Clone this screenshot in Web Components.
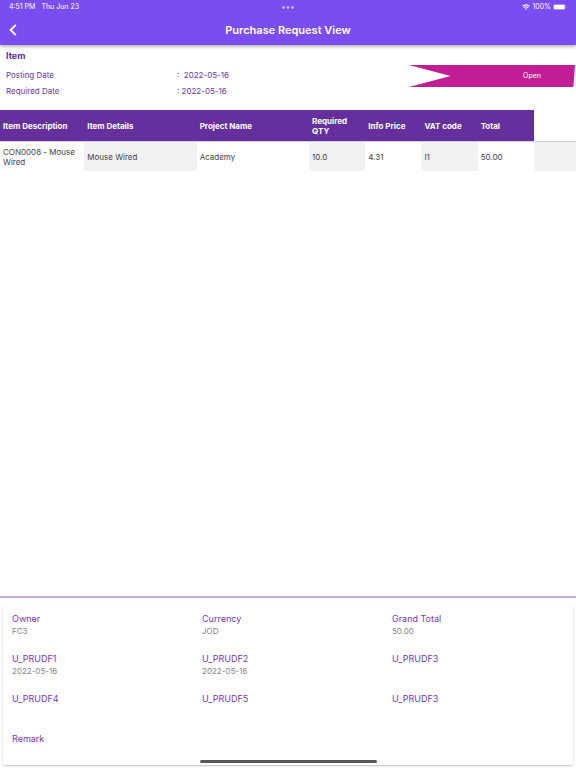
<!DOCTYPE html>
<html lang="en">
<head>
<meta charset="utf-8">
<meta name="viewport" content="width=device-width, initial-scale=1">
<title>Purchase Request View</title>
<style>
  body {
    margin: 0;
    background: #fff;
    font-family: Inter, 'Liberation Sans', sans-serif;
    font-size: 8px;
    line-height: 10px;
  }
</style>
</head>
<body>
<purchase-request-page>
  <status-bar slot="top" time="4:51 PM" date="Thu Jun 23" battery="100%"></status-bar>
  <app-bar slot="top">Purchase Request View</app-bar>

  <request-summary heading="Item" status="Open">
    <summary-row label="Posting Date">:&nbsp; 2022-05-16</summary-row>
    <summary-row label="Required Date">: 2022-05-16</summary-row>
  </request-summary>
  <item-table></item-table>

  <totals-card slot="bottom">
    <info-field label="Owner">FC3</info-field>
    <info-field label="Currency">JOD</info-field>
    <info-field label="Grand Total">50.00</info-field>
    <info-field label="U_PRUDF1">2022-05-16</info-field>
    <info-field label="U_PRUDF2">2022-05-16</info-field>
    <info-field label="U_PRUDF3"></info-field>
    <info-field label="U_PRUDF4"></info-field>
    <info-field label="U_PRUDF5"></info-field>
    <info-field label="U_PRUDF3"></info-field>
    <info-field label="Remark"></info-field>
  </totals-card>
</purchase-request-page>

<script>
/**
 * Base element: renders its styles and markup into an open shadow root
 */
class ViewElement extends HTMLElement {
  constructor() {
    super();
    this.attachShadow({ mode: 'open' });
  }

  connectedCallback() {
    this.shadowRoot.innerHTML = `
      <style>${this.getStyles()}</style>
      ${this.getMarkup()}
    `;
  }
}

class PurchaseRequestPage extends ViewElement {
  getMarkup() {
    return `
      <header><slot name="top"></slot></header>
      <main><slot></slot></main>
      <footer><slot name="bottom"></slot></footer>
      <div class="home-indicator"></div>
    `;
  }

  getStyles() {
    return `
      :host {
        display: flex;
        flex-direction: column;
        min-height: 100vh;
        position: relative;
      }

      header {
        background: #7a4df0;
        color: #fff;
        box-shadow: 0 1px 4px rgba(0, 0, 0, 0.4);
      }

      main {
        flex: 1;
      }

      footer {
        border-top: 2px solid #c6a9e4;
        padding: 6px 3px 3px;
      }

      /* Floats over the bottom card */
      .home-indicator {
        position: absolute;
        bottom: 5px;
        left: 50%;
        width: 177px;
        height: 3px;
        margin-left: -88px;
        border-radius: 2px;
        background: #59595b;
      }
    `;
  }
}

class StatusBar extends ViewElement {
  getMarkup() {
    return `
      <div class="side">
        <span>${this.getAttribute('time')}</span>
        <span>${this.getAttribute('date')}</span>
      </div>
      <svg width="12" height="3" viewBox="0 0 12 3" fill="#c9b5fb" aria-hidden="true">
        <circle cx="1.5" cy="1.5" r="1.4"/>
        <circle cx="6" cy="1.5" r="1.4"/>
        <circle cx="10.5" cy="1.5" r="1.4"/>
      </svg>
      <div class="side end">
        <svg width="8" height="6" viewBox="0 0 16 12" fill="none" stroke="#fff" stroke-width="2.2" aria-hidden="true">
          <path d="M1 4.6a10 10 0 0 1 14 0"/>
          <path d="M3.8 7.5a6 6 0 0 1 8.4 0"/>
          <path d="M8 11.8 5.8 9.5a3.2 3.2 0 0 1 4.4 0z" fill="#fff" stroke="none"/>
        </svg>
        <span>${this.getAttribute('battery')}</span>
        <svg width="14" height="6" viewBox="0 0 28 12" aria-hidden="true">
          <rect x=".5" y=".5" width="24" height="11" rx="3" fill="none" stroke="#b49bf8"/>
          <rect x="1.6" y="1.6" width="21.8" height="8.8" rx="2" fill="#fff"/>
          <path d="M26 4v4c1.6-.6 1.6-3.4 0-4z" fill="#b49bf8"/>
        </svg>
      </div>
    `;
  }

  getStyles() {
    return `
      :host {
        display: grid;
        grid-template-columns: 1fr auto 1fr;
        align-items: center;
        height: 14px;
        padding: 0 9px;
        font-size: 7px;
      }

      .side {
        display: flex;
        align-items: center;
        gap: 6px;
      }

      .end {
        justify-content: flex-end;
        gap: 2px;
      }
    `;
  }
}

class AppBar extends ViewElement {
  getMarkup() {
    return `
      <button type="button" aria-label="Back">
        <svg width="8" height="12" viewBox="0 0 8 12" fill="none" stroke="#fff" stroke-width="1.9" aria-hidden="true">
          <path d="M6.8 .8 1.6 6l5.2 5.200"/>
        </svg>
      </button>
      <h1><slot></slot></h1>
    `;
  }

  getStyles() {
    return `
      :host {
        display: grid;
        grid-template-columns: 25px 1fr 25px;
        align-items: center;
        height: 31px;
      }

      button {
        display: flex;
        justify-content: center;
        padding: 8px 0;
        border: 0;
        background: none;
        cursor: pointer;
      }

      h1 {
        margin: 0;
        font-size: 11px;
        line-height: 16px;
        font-weight: 600;
        text-align: center;
      }
    `;
  }
}

class RequestSummary extends ViewElement {
  getMarkup() {
    return `
      <div class="details">
        <h2>${this.getAttribute('heading')}</h2>
        <slot></slot>
      </div>
      <div class="ribbon">${this.getAttribute('status')}</div>
    `;
  }

  getStyles() {
    return `
      :host {
        display: flex;
        justify-content: space-between;
        align-items: flex-start;
        padding: 5px 1px 11px 6px;
        color: #6a35a8;
      }

      .details {
        flex: 1;
      }

      h2 {
        margin: 0 0 5px;
        font-size: 9px;
        line-height: 12px;
        font-weight: 700;
        color: #5c2a9d;
      }

      .ribbon {
        box-sizing: border-box;
        width: 166px;
        margin-top: 15px;
        padding: 6px 0 6px 80px;
        background: #c21e93;
        color: #fff;
        font-size: 7px;
        text-align: center;
        clip-path: polygon(0 0, 100% 0, 99% 100%, 0 100%, 25% 50%);
      }
    `;
  }
}

class SummaryRow extends ViewElement {
  getMarkup() {
    return `
      <span>${this.getAttribute('label')}</span>
      <span><slot></slot></span>
    `;
  }

  getStyles() {
    return `
      :host {
        display: grid;
        grid-template-columns: 171px 1fr;
        line-height: 16px;
      }
    `;
  }
}

class ItemTable extends ViewElement {
  getMarkup() {
    const columns = [
      { title: 'Item Description', size: 'medium' },
      { title: 'Item Details', size: 'wide' },
      { title: 'Project Name', size: 'wide' },
      { title: 'Required QTY', size: 'narrow' },
      { title: 'Info Price', size: 'narrow' },
      { title: 'VAT code', size: 'narrow' },
      { title: 'Total', size: 'narrow' }
    ];
    const rows = [
      ['CON0008 - Mouse Wired', 'Mouse Wired', 'Academy', '10.0', '4.31', 'I1', '50.00']
    ];

    return `
      <table>
        <colgroup>${columns.map(c => `<col class="${c.size}">`).join('')}<col></colgroup>
        <thead>
          <tr>${columns.map(c => `<th scope="col">${c.title}</th>`).join('')}<td></td></tr>
        </thead>
        <tbody>
          ${rows.map(row => `<tr>${row.map(cell => `<td>${cell}</td>`).join('')}<td></td></tr>`).join('')}
        </tbody>
      </table>
    `;
  }

  getStyles() {
    return `
      :host {
        display: block;
      }

      table {
        width: 100%;
        table-layout: fixed;
        border-spacing: 0;
        color: #424242;
      }

      .medium { width: 14.63%; }
      .wide { width: 19.51%; }
      .narrow { width: 9.76%; }

      th, td {
        box-sizing: border-box;
        padding: 0 3px;
        text-align: left;
      }

      th {
        height: 32px;
        background: #65309e;
        color: #fff;
        font-weight: 700;
      }

      thead th, thead td {
        border-bottom: 1px solid #d2d0d4;
      }

      tbody td {
        height: 29px;
      }

      tbody td:nth-child(even) {
        background: #f2f2f2;
      }
    `;
  }
}

class TotalsCard extends ViewElement {
  getMarkup() {
    return `<slot></slot>`;
  }

  getStyles() {
    return `
      :host {
        display: grid;
        grid-template-columns: repeat(3, 1fr);
        row-gap: 16px;
        padding: 9px 0 8px;
        border-radius: 2px;
        background: #fff;
        box-shadow: 0 1px 2px rgba(0, 0, 0, 0.25);
      }
    `;
  }
}

class InfoField extends ViewElement {
  getMarkup() {
    return `
      <div class="label">${this.getAttribute('label')}</div>
      <div class="value"><slot></slot></div>
    `;
  }

  getStyles() {
    return `
      :host {
        display: block;
        padding-left: 9px;
      }

      .label {
        font-size: 9px;
        line-height: 12px;
        color: #7337b0;
      }

      .value {
        min-height: 12px;
        line-height: 12px;
        color: #858585;
      }
    `;
  }
}

customElements.define('purchase-request-page', PurchaseRequestPage);
customElements.define('status-bar', StatusBar);
customElements.define('app-bar', AppBar);
customElements.define('request-summary', RequestSummary);
customElements.define('summary-row', SummaryRow);
customElements.define('item-table', ItemTable);
customElements.define('totals-card', TotalsCard);
customElements.define('info-field', InfoField);
</script>
</body>
</html>
